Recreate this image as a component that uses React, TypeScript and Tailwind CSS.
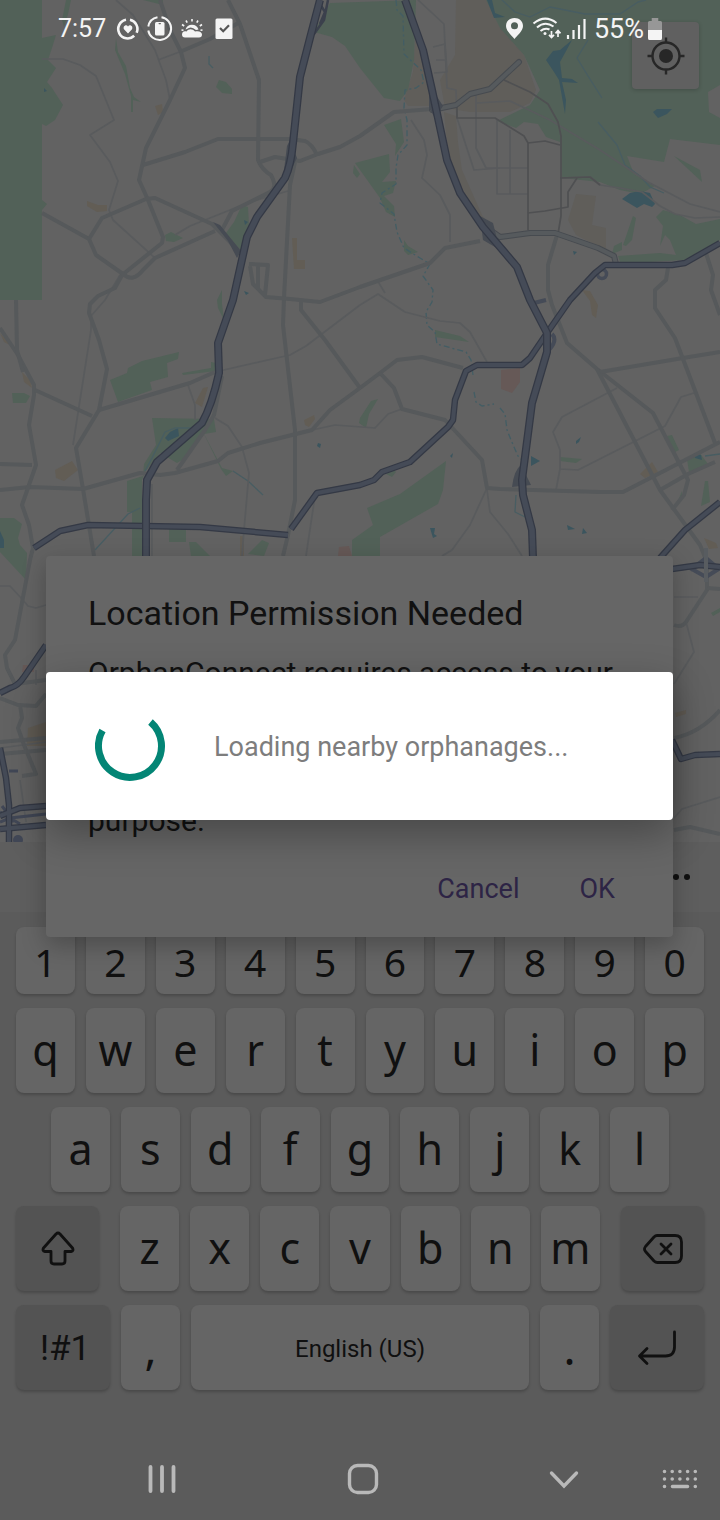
import type { ReactNode } from "react";

const greens = [
  "M0 0H42V300H0Z",
  "M66 0H71L68 14L64 27L62 20Z",
  "M42 38L56 35L52 48L48 60L56 68L47 82L52 88L63 105L55 120L46 126L42 124Z",
  "M143 0H163V5Z",
  "M116 38L118 52L126 66L130 88L134 97L141 102L133 100L133 112L131 112L131 96L125 74L115 50Z",
  "M219 80L226 82L232 89V94L222 93L216 87Z",
  "M42 200L47 204L42 210Z",
  "M165 235L171 232L183 238L174 242L166 241Z",
  "M242 205L248 207L249 225L240 252L226 233L234 222Z",
  "M330 3L416 0L414 60L408 90L400 101L384 98L360 68L345 46L332 37L314 32Z",
  "M486 0H720V85L708 92L709 112L720 118V145L670 139L664 162L627 156L634 174L655 186L640 194L620 190L600 182L562 178L560 142L546 137L538 124L524 122L516 128L497 121L530 105L540 90L524 55L500 28Z",
  "M355 163L389 154L390 172L382 182L396 181L393 193L384 196L394 206L395 217L386 212L380 198L370 184Z",
  "M384 125L401 119L404 142L395 156L396 144Z",
  "M354 165L360 174L357 178L353 173Z",
  "M404 240L408 246L418 252L408 255L404 251Z",
  "M633 216L636 218L632 240L626 246L623 245Z",
  "M656 217L663 210L680 215L696 224L720 219V240L684 260L650 262L620 262L618 256L660 253L676 255L670 240L665 235L660 246L663 226Z",
  "M674 156L700 170L702 182Z",
  "M614 246L622 242V250L612 254Z",
  "M110 380L127 373L128 368L142 361L179 352L178 359L167 363L168 377L150 382L152 390L118 402Z",
  "M182 373L211 368V362L216 363V371L183 375Z",
  "M12 393H24L30 396L26 403L13 403Z",
  "M222 290L217 300L218 308L224 320L222 304Z",
  "M152 418L214 419L216 432L204 434L187 457L177 463L160 453L145 472L142 480V556H132V512H127V481L143 476L144 464L156 445Z",
  "M202 430L222 468L233 471L226 476L221 469Z",
  "M0 518L14 518L22 524L18 538L20 545L27 553L26 580L0 552Z",
  "M169 528H186V542H169Z",
  "M189 542H196L210 556H191Z",
  "M248 554L262 540L269 543L264 556Z",
  "M367 508L400 494L446 461L443 490L438 504L380 537V556H352V540L373 525Z",
  "M386 474L394 470L396 472L392 477Z",
  "M360 418L371 401L378 399L369 414L366 428L359 423Z",
  "M435 330L460 336L469 342L435 337Z",
  "M560 457L582 459L576 463L560 461Z",
  "M667 436L672 435L679 450L675 452Z",
  "M687 459L699 452L708 464L689 472Z",
  "M705 481H708L710 502L701 506Z",
  "M682 491L682 498L675 508Z",
  "M711 613L720 608V612L713 616Z",
];

const tans = [
  "M456 0L486 0L500 28L524 55L536 90L530 103L510 112L470 112L445 108L440 80L455 55Z",
  "M416 30L425 62L432 106H408L404 100L413 72Z",
  "M444 112L456 116L458 142L462 170L482 215L490 226L474 216L458 190L448 155Z",
  "M576 194L596 196L592 225L606 228L606 250L590 242L576 235L568 220Z",
];

const sands = [
  "M155 106L162 104L163 112L158 115Z",
  "M87 201L98 205H107V211L97 212L87 206Z",
  "M292 238H297V260H305V269H294Z",
  "M203 388L208 387L202 407L195 403Z",
  "M55 470L72 461L78 470L64 481L56 478Z",
  "M304 420L314 415L315 419L309 427L305 425Z",
  "M582 290L590 291L598 305L596 318L592 315L590 301Z",
  "M640 474L652 462L658 472L645 478Z",
  "M704 538L716 543L718 548L709 549Z",
  "M22 372L30 380L32 388L24 382Z",
  "M0 333L12 346L4 342Z",
  "M28 728L46 722V746L27 746Z",
  "M675 713L686 710V714L676 717Z",
  "M240 536H244V556H240Z",
];

const waters = [
  "M487 0L492 0L495 13L505 17L494 18Z",
  "M546 60L553 51L560 50L572 40L565 53L560 62L562 78L572 79L578 83L562 82L566 100L565 114L559 80L554 72Z",
  "M653 112L657 109L672 109L667 114L658 118Z",
  "M622 199L630 193L640 191L650 193L655 204L652 207L644 204L637 208Z",
  "M573 251L577 252L574 255Z",
  "M170 432L178 428L179 436L168 441L165 438Z",
  "M531 456L540 461L531 466Z",
  "M576 441L581 437L579 442L576 444Z",
  "M430 528L435 528L434 534L437 536L433 538Z",
  "M567 525L575 529L568 530Z",
  "M583 528L587 533L582 534Z",
  "M318 443L321 444L320 448L317 446Z",
  "M450 456L453 453L452 458Z",
  "M694 453L701 455L702 460L695 458Z",
  "M0 531L4 540V548H0Z",
  "M44 88L47 91L44 92Z",
  "M244 291L249 293L246 295Z",
  "M244 220L248 222L245 225Z",
];

const dashedStreams = [
  "M396 0L397 10L403 16L404 54L421 70L424 82L416 88L405 90L404 108L407 120L407 145L398 155L396 168L396 184L382 193L380 203L394 214L397 232L404 248L420 258L430 264L423 276L433 290L432 302L426 312L427 325L435 332L437 344L466 352L471 360L473 375",
  "M474 392L476 402L482 406L494 404",
  "M500 408L505 414L507 430L511 440L518 456L522 460",
];

const streams = [
  "M502 0L515 12L530 17L550 7L585 14L620 14L638 2L646 0",
  "M588 40L577 58L588 76L602 98",
  "M598 122L617 145L625 165L640 176L650 187L664 193",
  "M95 550L128 514L140 508",
  "M145 471L152 458L165 432L175 428L192 428",
  "M233 471L248 481L263 495",
  "M516 495L515 512L525 517",
  "M209 56V64L213 68",
  "M705 456L720 454",
];

const minorRoads = [
  "M116 0L133 15L155 50L166 80L170 100",
  "M42 59H63L80 65L96 76L114 120L90 135L110 162L118 181L109 210L113 220L155 258",
  "M158 60L182 51",
  "M175 235L190 226L250 202L288 191",
  "M120 275L105 300L91 316L91 330L80 400L73 445",
  "M215 372L290 355L306 346L360 305L378 294L405 312L440 321L460 323L470 332L487 362",
  "M188 385L195 405L195 420",
  "M215 418L228 426L242 447L249 473L244 530L242 556",
  "M312 430L335 425L375 428L388 414L402 409",
  "M487 488L470 525L452 550L442 556",
  "M487 490L490 512L508 534L522 556",
  "M617 388L562 417L553 432L560 450L560 469L578 470L665 426L681 397L694 393",
  "M560 469L556 490",
  "M411 120L424 140L427 155L422 178L440 195L450 215L450 242",
  "M377 280L385 293",
  "M418 0L444 24L447 88L456 90L457 118L474 170L500 168",
  "M476 94V148L486 168M497 120V194H528M510 130V194M486 168H528",
  "M433 47L445 44L447 72L434 73M436 60H447",
  "M560 178L590 177L600 185L620 188L642 192L660 206L675 214L695 218L720 217",
  "M477 103L510 101L550 120L600 150L648 182L690 204L720 212",
  "M152 484V556",
  "M315 496L306 556",
  "M0 586L10 586L22 599L28 606L36 608L46 605",
  "M36 670V685M0 748L46 742M20 780L26 822",
  "M674 597H698M686 622L694 652L674 684",
  "M674 818L682 809L720 797",
];

const roads = [
  "M160 0L170 30L181 52L185 68L170 100L146 148L139 180L148 200L163 237L162 243L122 275L115 288L98 296L90 304L89 313L99 340L107 369L99 410L76 448L83 489L94 556",
  "M42 213L89 239L96 255L123 274Q133 283 143 270L155 258L215 231",
  "M89 239L102 218L146 199L155 198L212 224L240 252",
  "M143 165L185 152L218 139H290L305 141Q312 144 317 155",
  "M228 0L240 24L259 80L258 160Q262 170 271 175Q278 188 270 192L232 211L222 230",
  "M182 51L210 39L240 22",
  "M260 162L275 157L300 161L318 154L340 147L360 136L394 112L432 109",
  "M295 162L290 185L284 298L283 325L295 430L295 500L288 535L283 556",
  "M249 264L268 265L265 295M258 265V288M250 266L253 284L266 297L290 299L320 302L360 287L430 263L445 248L480 241",
  "M301 302V310L325 340L360 388",
  "M360 388L330 410L312 430L260 443L228 453L218 461L175 473L160 475L140 473L83 489L30 487L0 490",
  "M360 388L380 373L397 360L422 357L463 368",
  "M380 373L394 388L402 409L445 420L482 460L487 488L500 489L600 492H623L660 473L720 442",
  "M557 235L548 265V290L552 305L567 343L597 369L653 413L688 480L684 495L672 510",
  "M597 369L660 490L700 545L707 562V590L686 622Q682 628 674 625",
  "M600 372L683 358L720 352",
  "M668 268L666 280L655 290V308L675 338L715 443",
  "M705 250L713 275L711 290L720 315",
  "M707 588L720 589M674 738Q700 733 720 710",
  "M0 328L18 355L34 385V395L29 425L36 465L22 505L29 525L33 548L30 560L15 640L5 655L7 668L15 684",
  "M0 698L18 705L36 706L46 694M20 705L22 718L18 728L24 745L36 774L22 776M15 684L46 680",
  "M0 742L46 738M0 754L46 750",
  "M16 300L17 350L23 372M35 390L92 416M99 410L190 383L215 372M0 464L32 465",
  "M660 490L688 474L715 462",
  "M222 376L214 415L205 430L177 470",
  "M674 830L690 827L720 834",
];

const gridRoads = [
  "M457 104V118H495L524 136L528 143V230",
  "M504 80L530 92L548 104L558 122L561 136V216L558 234",
  "M528 143L545 141L560 145",
  "M528 213L545 211L568 207V192L577 178",
  "M560 178L590 177L600 185",
];

const trunkRoads = [
  "M432 110L456 105L470 94L490 89L519 62",
  "M490 230L500 237L530 233L555 233L598 248L614 256L616 264",
];

const motorways = [
  "M320 0L310 38L300 77L293 143Q291 165 285 178L257 217L247 237L233 300L218 343L219 373Q212 405 202 423L157 462L147 480L146 500V558",
  "M405 0L423 50L432 90L447 160L460 193L483 227L517 267L530 300L547 333V352L532 403L522 480L523 495L532 530L533 558",
];

const highways = [
  "M720 243L685 263L672 265H605L595 273L570 300L547 333L530 358L522 365H477L466 371L455 400L453 420L448 427L410 462L382 472L374 480L360 485L317 493L291 529",
  "M34 548L60 531L88 525L200 527L288 535",
  "M720 502L685 530L660 558",
  "M672 569L700 565L720 567",
  "M672 740L681 759L695 755L720 754",
  "M46 645L24 677Q18 686 10 688L0 693",
  "M0 748L6 778L9 805V842",
  "M0 816L20 808L46 806",
  "M0 829L46 825",
];

function CityMap() {
  return (
    <svg
      aria-label="Map"
      role="img"
      viewBox="0 0 720 842"
      preserveAspectRatio="xMidYMin slice"
      className="absolute inset-0 h-full w-full"
      fill="none"
      strokeLinejoin="round"
    >
      <rect width="720" height="842" fill="#626262" />
      {tans.map((d) => <path key={d} d={d} fill="#605e5a" />)}
      {sands.map((d) => <path key={d} d={d} fill="#625d55" />)}
      {greens.map((d) => <path key={d} d={d} fill="#526158" />)}
      <path d="M501 370L520 368V382L512 393L501 389Z" fill="#665957" />
      <path d="M339 547L349 546L352 556H338Z" fill="#665957" />
      <path d="M23 665H34V672H22Z" fill="#665957" />
      {waters.map((d) => <path key={d} d={d} fill="#3b555e" />)}
      {dashedStreams.map((d) => <path key={d} d={d} stroke="#435d64" strokeWidth="1.3" strokeDasharray="6 3 2 3" />)}
      {streams.map((d) => <path key={d} d={d} stroke="#485d62" strokeWidth="1.3" />)}
      {minorRoads.map((d) => <path key={d} d={d} stroke="#595b5d" strokeWidth="1.7" />)}
      {gridRoads.map((d) => <path key={d} d={d} stroke="#4f5052" strokeWidth="1.7" />)}
      {roads.map((d) => <path key={d} d={d} stroke="#56595b" strokeWidth="4" />)}
      {trunkRoads.map((d) => <path key={d} d={d} stroke="#474b50" strokeWidth="6" strokeLinecap="round" />)}
      {trunkRoads.map((d) => <path key={d} d={d} stroke="#565a5d" strokeWidth="4" strokeLinecap="round" />)}
      <g fill="#464b53">
        <path d="M429 84L443 106L435 118L429 108Z" />
        <path d="M480 216L493 223L495 231L500 250L483 240Z" />
        <path d="M512 487Q514 470 521 465L531 485Z" />
        <path d="M287 146L290 140L297 158L293 166L284 170Z" />
        <path d="M213 222L220 225L241 251L237 258L228 241Z" />
      </g>
      <path d="M328 0L324 20L314 34M320 4L325 12L320 24" stroke="#3b404c" strokeWidth="2.500" />
      <circle cx="602" cy="274" r="4.500" stroke="#454b57" strokeWidth="3.500" />
      <path d="M534 303L546 300M552 334Q558 340 549 350M690 570L706 558L720 570M690 568L706 577L720 568" stroke="#454b57" strokeWidth="4" />
      <path d="M0 822L10 818L46 814M0 812L20 824M2 806L14 822M9 771H18" stroke="#414756" strokeWidth="3" />
      <circle cx="18" cy="840" r="5" fill="#414756" />
      {highways.map((d) => <path key={d} d={d} stroke="#343945" strokeWidth="6.500" />)}
      {highways.map((d) => <path key={d} d={d} stroke="#454b57" strokeWidth="4" />)}
      {motorways.map((d) => <path key={d} d={d} stroke="#343945" strokeWidth="8" />)}
      {motorways.map((d) => <path key={d} d={d} stroke="#454b57" strokeWidth="5.500" />)}
      <path d="M706 548V582" stroke="#585c60" strokeWidth="4" />
    </svg>
  );
}

function StatusBar() {
  return (
    <header className="absolute inset-x-0 top-0 z-30 flex h-14 items-center justify-between pt-0.5 pr-[58px] pl-[58px] text-[#f4f4f4]">
      <div className="flex items-center gap-[10px]">
        <time className="text-[25px]">7:57</time>
        <svg width="120" height="28" viewBox="116 15 120 28" fill="none" role="img" aria-label="Notifications">
          <path d="M130 19.800A9.400 9.400 0 0 1 136.600 32.800M134.200 35.800A9.400 9.400 0 1 1 126 19.800" stroke="currentColor" strokeWidth="2.600" />
          <path d="M128 33.500L124.200 29.600C122.200 26.800 126 23.700 128 26.400C130 23.700 133.800 26.800 131.800 29.600Z" fill="currentColor" />
          <path d="M161.500 17.200A11.500 11.500 0 1 1 148.300 30.500M148.300 26.500A11.500 11.500 0 0 1 157.500 17.200" stroke="currentColor" strokeWidth="2" />
          <rect x="155" y="22" width="9.500" height="13.500" rx="1.500" fill="currentColor" />
          <rect x="158.500" y="23" width="2.500" height="1.200" rx=".6" fill="#666666" />
          <path d="M182 34.500C182 31.500 184.500 30.500 186.500 31.500C188.500 28.500 192.500 28.500 195 31.500C199 30.500 202 32 202 34.500Q202 37.500 199 37.500H185Q182 37.500 182 34.500Z" fill="currentColor" />
          <path d="M185.500 29.500A6.800 6.800 0 0 1 198.500 29.500L196 30Q191 25.500 187 29Z" fill="currentColor" />
          <path d="M192 19V21.500M186 20.500L187.200 22.700M198 20.500L196.800 22.700M182 24.500L184.200 26M202 24.500L199.800 26M181.500 30L183.500 30.300M202.500 30L200.500 30.300" stroke="currentColor" strokeWidth="1.600" />
          <rect x="215.500" y="18.500" width="17" height="20.500" rx="1.500" fill="currentColor" />
          <path d="M220 28L223.200 31.200L229 25.200" stroke="#555555" strokeWidth="2.200" />
        </svg>
      </div>
      <div className="flex items-center">
        <svg className="mr-2" width="80" height="24" viewBox="505 17 80 24" fill="none" role="img" aria-label="Location, Wi-Fi and signal">
          <path fillRule="evenodd" d="M513.500 18C508.500 18 505 21.500 505 26C505 31 510.500 35 513.500 39C516.500 35 522 31 522 26C522 21.500 518.500 18 513.500 18ZM513.500 22.300A3.500 3.500 0 1 1 513.500 29.300A3.500 3.500 0 0 1 513.500 22.300Z" fill="currentColor" />
          <path d="M532.500 23.500Q544 14 555.500 23M536 27.500Q544 20.500 552.500 26.500M539.500 31Q544 27.500 548.500 29.500" stroke="currentColor" strokeWidth="2.100" />
          <circle cx="544" cy="33.500" r="1.500" fill="currentColor" />
          <path d="M550.500 31V37M548 34.800L550.500 37.500L553 34.800M557 37V31M554.500 33.300L557 30.600L559.500 33.300" stroke="currentColor" strokeWidth="1.700" />
          <path d="M567 35V39M572.500 30V39M578 25V39M583.500 19V39" stroke="currentColor" strokeWidth="2.200" />
        </svg>
        <span className="mr-1 text-[27px]">55%</span>
        <svg width="14" height="22" viewBox="0 0 15 22" preserveAspectRatio="none" role="img" aria-label="Battery">
          <path d="M4 0H11V3H13.500Q15 3 15 4.500V20Q15 22 13.500 22H1.500Q0 22 0 20V4.500Q0 3 1.500 3H4Z" fill="#979797" />
          <path d="M0 12H15V20Q15 22 13.500 22H1.500Q0 22 0 20Z" fill="currentColor" />
        </svg>
      </div>
    </header>
  );
}

function Key({ children, label, className }: { children: ReactNode; label?: string; className: string }) {
  return (
    <button
      type="button"
      aria-label={label}
      className={`flex items-center justify-center rounded-lg shadow-[0_2px_3px_rgba(0,0,0,0.2)] ${className}`}
    >
      {children}
    </button>
  );
}

function Letters({ keys }: { keys: string }) {
  return (
    <>
      {keys.split("").map((k) => (
        <Key key={k} className="h-[85px] flex-1 bg-[#656565] pb-0.5 font-['Noto_Sans',sans-serif] text-[43px] leading-none">
          {k}
        </Key>
      ))}
    </>
  );
}

function Keyboard() {
  return (
    <section aria-label="Keyboard" className="bg-[#5b5b5b] text-[#101010]">
      <div className="flex h-[70px] items-center justify-end bg-[#5e5e5e] pr-[29px]">
        <button type="button" aria-label="More options">
          <svg width="30" height="8" viewBox="0 0 30 8" fill="currentColor">
            <circle cx="4" cy="4" r="3" />
            <circle cx="15" cy="4" r="3" />
            <circle cx="26" cy="4" r="3" />
          </svg>
        </button>
      </div>
      <div className="flex flex-col gap-[14px] px-4 pt-[15px] pb-12">
        <div className="flex gap-[11px]">
          {"1234567890".split("").map((k) => (
            <Key key={k} className="h-[67px] flex-1 bg-[#656565] pt-0.5 font-['Noto_Sans',sans-serif] text-[39px] leading-none">
              {k}
            </Key>
          ))}
        </div>
        <div className="flex gap-[11px]">
          <Letters keys="qwertyuiop" />
        </div>
        <div className="flex gap-[11px] px-[35px]">
          <Letters keys="asdfghjkl" />
        </div>
        <div className="flex gap-[21px]">
          <Key label="Shift" className="h-[85px] w-[83px] bg-[#535353]">
            <svg width="34" height="36" viewBox="0 0 34 36" fill="none" stroke="currentColor" strokeWidth="2.800" strokeLinejoin="round">
              <path d="M15 3Q17 1 19 3L31.500 17Q33 20 30 20.500H24V30Q24 33 21 33H13Q10 33 10 30V20.500H4Q1 20 2.500 17Z" />
            </svg>
          </Key>
          <div className="flex flex-1 gap-[11px]">
            <Letters keys="zxcvbnm" />
          </div>
          <Key label="Backspace" className="h-[85px] w-[83px] bg-[#535353]">
            <svg width="40" height="30" viewBox="0 0 40 30" fill="none" stroke="currentColor" strokeWidth="2.800" strokeLinecap="round" strokeLinejoin="round">
              <path d="M14 1.500H32Q38.500 1.500 38.500 8V22Q38.500 28.500 32 28.500H14.500Q12.500 28.500 11 27L2.500 17.500Q.5 15 2.500 12.500L11 3Q12.500 1.500 14 1.500Z" />
              <path d="M18 10L28 20M28 10L18 20" />
            </svg>
          </Key>
        </div>
        <div className="flex gap-[11px]">
          <Key className="h-[85px] w-[94px] bg-[#535353] pt-1 pl-1 text-[35px]">!#1</Key>
          <Key className="h-[85px] w-[59px] bg-[#656565] font-['Noto_Sans',sans-serif] text-[45px]">,</Key>
          <Key className="h-[85px] flex-1 bg-[#656565] pt-0.5 text-[24px]">English (US)</Key>
          <Key className="h-[85px] w-[59px] bg-[#656565] font-['Noto_Sans',sans-serif] text-[45px]">.</Key>
          <Key label="Enter" className="h-[85px] w-[94px] bg-[#535353]">
            <svg width="40" height="36" viewBox="0 0 40 36" fill="none" stroke="currentColor" strokeWidth="2.800" strokeLinecap="round" strokeLinejoin="round">
              <path d="M37.500 2V17Q37.500 26 28.500 26H3M10 18.500L2.500 26L10 33.500" />
            </svg>
          </Key>
        </div>
      </div>
      <nav aria-label="System" className="flex h-[82px] items-center pr-6 pl-[61px] text-[#b9b9b9]">
        <button type="button" aria-label="Recent apps" className="flex flex-1 justify-center">
          <svg width="28" height="30" viewBox="0 0 28 30" stroke="currentColor" strokeWidth="3.800" strokeLinecap="round">
            <path d="M2.500 3V27M14 3V27M25.500 3V27" />
          </svg>
        </button>
        <button type="button" aria-label="Home" className="flex flex-1 justify-center">
          <svg width="32" height="32" viewBox="0 0 32 32" fill="none" stroke="currentColor" strokeWidth="3.400">
            <rect x="2.500" y="2.500" width="27" height="27" rx="8" />
          </svg>
        </button>
        <button type="button" aria-label="Hide keyboard" className="flex flex-1 justify-center">
          <svg width="30" height="20" viewBox="0 0 30 20" fill="none" stroke="currentColor" strokeWidth="3.400" strokeLinecap="round">
            <path d="M2.500 4L15 17L27.500 4" />
          </svg>
        </button>
        <button type="button" aria-label="Choose keyboard" className="flex w-8 justify-center">
          <svg className="shrink-0" width="36" height="20" viewBox="0 0 36 20" fill="none" stroke="currentColor" strokeWidth="3.600" strokeLinecap="round">
            <path d="M2.500 2.500h.01M10.200 2.500h.01M17.900 2.500h.01M25.600 2.500h.01M33.300 2.500h.01M2.500 10h.01M10.200 10h.01M17.900 10h.01M25.600 10h.01M33.300 10h.01M2.500 17.500h.01M10.500 17.500H25.500M33.300 17.500h.01" />
          </svg>
        </button>
      </nav>
    </section>
  );
}

function PermissionDialog() {
  return (
    <div className="absolute inset-x-0 top-0 bottom-[27px] z-10 flex items-center pr-[47px] pl-[46px]">
      <section
        role="dialog"
        aria-labelledby="permission-title"
        className="flex w-full flex-col rounded bg-[#666666] px-[42px] pt-9 pb-6 text-[#111111] shadow-[0_8px_24px_rgba(0,0,0,0.25)]"
      >
        <h2 id="permission-title" className="text-[34px] leading-[42px]">Location Permission Needed</h2>
        <div className="mt-5 flex h-[185px] flex-col justify-between text-[30px] leading-[37px]">
          <p className="whitespace-nowrap">OrphanConnect requires access to your</p>
          <p>purpose.</p>
        </div>
        <div className="mt-[26px] flex h-12 items-center justify-end gap-[60px] pr-4 text-[27px] text-[#2d2445]">
          <button type="button">Cancel</button>
          <button type="button">OK</button>
        </div>
      </section>
    </div>
  );
}

function LoadingDialog() {
  return (
    <div className="absolute inset-x-0 top-0 bottom-7 z-20 flex items-center pr-[47px] pl-[46px]">
      <section
        role="dialog"
        aria-label="Loading"
        className="flex h-[148px] w-full items-center gap-[49px] rounded bg-white pl-[49px] text-[27px] text-[#7d7d7d] shadow-[0_14px_40px_rgba(0,0,0,0.3)]"
      >
        <svg width="70" height="70" viewBox="-35 -35 70 70" fill="none" aria-hidden="true">
          <path d="M20.500 -24A31.500 31.500 0 1 1 -27.500 -15.500" stroke="#038575" strokeWidth="7" />
        </svg>
        <p className="pt-0.5">Loading nearby orphanages...</p>
      </section>
    </div>
  );
}

export default function App() {
  return (
    <main className="relative flex min-h-screen flex-col overflow-hidden bg-[#5b5b5b] font-['Roboto','Noto_Sans',sans-serif]">
      <StatusBar />
      <section className="relative min-h-[600px] flex-1 overflow-hidden">
        <CityMap />
        <button
          type="button"
          aria-label="My location"
          className="absolute top-[22px] right-[21px] flex h-[67px] w-[67px] items-center justify-center rounded-sm bg-[#606060] text-[#272727] shadow-[0_1px_4px_rgba(0,0,0,0.2)]"
        >
          <svg width="38" height="38" viewBox="0 0 38 38" fill="none" stroke="currentColor" strokeWidth="2.400">
            <circle cx="19" cy="19" r="13.500" />
            <circle cx="19" cy="19" r="7" fill="currentColor" stroke="none" />
            <path d="M19 .5V6M19 32V37.500M.5 19H6M32 19H37.500" />
          </svg>
        </button>
      </section>
      <Keyboard />
      <PermissionDialog />
      <LoadingDialog />
    </main>
  );
}
